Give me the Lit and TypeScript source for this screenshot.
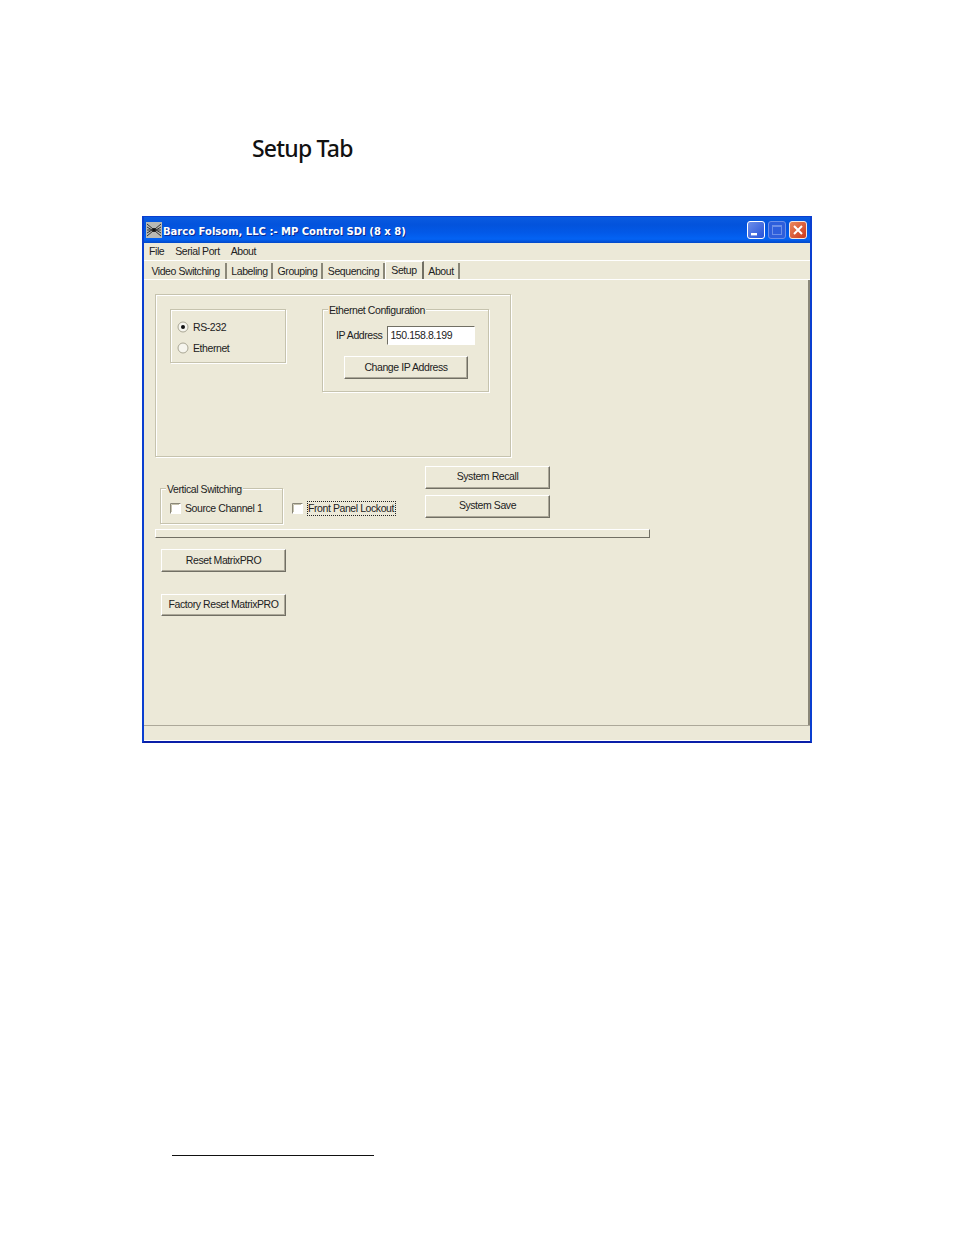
import { LitElement, html, svg, css } from "lit";
import { customElement } from "lit/decorators.js";

@customElement("app-root")
export class AppRoot extends LitElement {
  static styles = css`
    :host { display: block; width: 954px; height: 1235px; background: #fff; overflow: hidden;
      font-family: "Liberation Sans", Arial, sans-serif; font-size: 10.5px; letter-spacing: -0.42px; color: #222; }
    * { box-sizing: border-box; }
    h1 { margin: 0; height: 216px; padding: 132px 0 0 252px; font: 500 23px/32px "Noto Sans", sans-serif; color: #111; letter-spacing: -0.8px; }
    .win { margin-left: 142px; width: 670px; height: 527px; display: flex; flex-direction: column;
      background: #ece9d8; border: solid #0a3fd0; border-width: 1px 2px 2px 2px; border-bottom-color: #0a1fa8; }
    .title { height: 26px; flex: none; display: flex; align-items: center; padding: 0 3px 0 2px;
      background: linear-gradient(#0a5be0 0%, #0353dc 30%, #0259e8 60%, #0363f4 85%, #0248c8 100%); color: #fff;
      font: 700 10px "DejaVu Sans", sans-serif; letter-spacing: 0; text-shadow: 1px 1px 0 #0a2a90; white-space: nowrap; }
    .title span { padding-top: 2px; }
    .title svg.app { margin-right: 1px; flex: none; }
    .ctl { margin-left: auto; display: flex; gap: 3px; }
    .ctl svg { display: block; }
    .menu { height: 18px; flex: none; display: flex; align-items: center; padding: 0 0 1px 5px; border-bottom: 1px solid #fff; }
    .menu span { margin-right: 11px; }
    .tabs { height: 19px; flex: none; display: flex; align-items: flex-end; padding-left: 2px; border-bottom: 1px solid #fff; }
    .tab { height: 16px; display: flex; align-items: center; justify-content: center; border-right: 2px solid #8a8778; background: #ece9d8; margin-right: 1px; }
    .tab.on { height: 18px; margin-right: 0; border-top: 1px solid #fff; border-left: 1px solid #fff; border-right: 2px solid #716f64; padding-bottom: 2px; }
    .body { flex: 1; min-height: 0; padding: 14px 0 0 11px; border-right: 2px solid #8a8778; }
    .group { position: relative; border: 1px solid #c6c3ae; box-shadow: 1px 1px 0 #fff, inset 1px 1px 0 #fff; }
    .legend { position: absolute; top: -6px; left: 5px; background: #ece9d8; padding: 0 1px; line-height: 12px; white-space: nowrap; }
    .outer { width: 356px; height: 163px; display: flex; align-items: flex-start; gap: 36px; padding: 14px 0 0 14px; }
    .rs { width: 116px; height: 54px; padding: 11px 0 0 6px; display: flex; flex-direction: column; gap: 9px; }
    .radio { display: flex; align-items: center; gap: 4px; height: 12px; }
    .radio svg, .check svg { display: block; flex: none; }
    .eth { width: 167px; height: 83px; padding: 16px 0 0 13px; }
    .ip { display: flex; align-items: center; gap: 5px; }
    .ip > span { padding-bottom: 2px; }
    .input { width: 88px; height: 19px; background: #fff; border: 1px solid; border-color: #716f64 #fff #fff #716f64; padding-left: 2px; line-height: 16px; }
    .btn { width: 125px; height: 23px; display: flex; align-items: center; justify-content: center; background: #ece9d8;
      border: 1px solid; border-color: #fff #716f64 #716f64 #fff; box-shadow: inset -1px -1px 0 #aca899; white-space: nowrap; padding-bottom: 3px; }
    .eth .btn { margin: 11px 0 0 8px; width: 124px; padding-bottom: 1px; }
    .row { display: flex; align-items: flex-start; margin-top: 9px; padding-left: 5px; }
    .vs { width: 123px; height: 36px; margin-top: 22px; padding: 14px 0 0 9px; }
    .check { display: flex; align-items: center; gap: 5px; white-space: nowrap; height: 11px; }
    .vs .check { gap: 4px; }
    .vs .check span { padding-bottom: 2px; }
    .fp { margin: 37px 0 0 9px; width: 122px; }
    .fp span { border: 1px dotted #222; line-height: 13px; margin-left: -1px; width: 89px; }
    .stack { display: flex; flex-direction: column; gap: 6px; margin-left: 11px; }
    .bar { width: 495px; height: 9px; margin-top: 5px; border: 1px solid; border-color: #fff #716f64 #716f64 #fff; background: #ece9d8; }
    .resets { padding: 11px 0 0 6px; display: flex; flex-direction: column; gap: 22px; }
    .resets .btn:first-child { padding-bottom: 1px; }
    .resets .btn:last-child { height: 22px; }
    .status { height: 16px; flex: none; border-top: 1px solid #aca899; border-bottom: 1px solid #fff; }
    .note { width: 202px; height: 1px; margin: 412px 0 0 172px; background: #111; }
  `;

  private radio(on: boolean) {
    return html`<svg width="12" height="12" viewBox="0 0 12 12">
      <circle cx="6" cy="6" r="5" fill="#f6f5ee" stroke="#a9a694"/>
      ${on ? svg`<circle cx="6" cy="6" r="2" fill="#111"/>` : ""}
    </svg>`;
  }

  private box() {
    return html`<svg width="11" height="11" viewBox="0 0 11 11">
      <rect x="0" y="0" width="11" height="11" fill="#fff"/>
      <path d="M.5 10.5V.5H10.5" fill="none" stroke="#8a8778"/>
      <path d="M1.5 9V1.5H9" fill="none" stroke="#c6c3ae"/>
    </svg>`;
  }

  render() {
    return html`
      <h1>Setup Tab</h1>
      <div class="win">
        <div class="title">
          <svg class="app" width="16" height="16" viewBox="0 0 16 16">
            <rect width="16" height="16" fill="#b9b9b4"/>
            <path d="M1 2 7 7M1 5 6 8M1 8H6M1 11 6 8M1 14 7 9M15 2 9 7M15 5 10 8M15 8H10M15 11 10 8M15 14 9 9" stroke="#333" fill="none"/>
            <circle cx="8" cy="8" r="2" fill="#111"/>
          </svg>
          <span>Barco Folsom, LLC :- MP Control SDI (8 x 8)</span>
          <div class="ctl">
            <svg width="18" height="18" viewBox="0 0 18 18">
              <defs><linearGradient id="b" x1="0" y1="0" x2="1" y2="1"><stop offset="0" stop-color="#6f90ea"/><stop offset="1" stop-color="#2350d8"/></linearGradient>
              <linearGradient id="r" x1="0" y1="0" x2="1" y2="1"><stop offset="0" stop-color="#ec8a5e"/><stop offset="1" stop-color="#c9361a"/></linearGradient></defs>
              <rect x=".5" y=".5" width="17" height="17" rx="2.5" fill="url(#b)" stroke="#fff"/>
              <rect x="4" y="12" width="6" height="2.4" fill="#fff"/>
            </svg>
            <svg width="18" height="18" viewBox="0 0 18 18">
              <rect x=".5" y=".5" width="17" height="17" rx="2.5" fill="#2e5edc" stroke="#6c8fe8"/>
              <rect x="4.5" y="4.5" width="9" height="9" fill="none" stroke="#6c8fe8"/>
              <rect x="4" y="4" width="10" height="2" fill="#6c8fe8"/>
            </svg>
            <svg width="18" height="18" viewBox="0 0 18 18">
              <rect x=".5" y=".5" width="17" height="17" rx="2.5" fill="url(#r)" stroke="#f4e8e0"/>
              <path d="M5 5 13 13M13 5 5 13" stroke="#fff" stroke-width="2"/>
            </svg>
          </div>
        </div>
        <div class="menu"><span>File</span><span>Serial Port</span><span>About</span></div>
        <div class="tabs">
          <div class="tab" style="width:81px">Video Switching</div>
          <div class="tab" style="width:45px">Labeling</div>
          <div class="tab" style="width:49px">Grouping</div>
          <div class="tab" style="width:61px;margin-right:0">Sequencing</div>
          <div class="tab on" style="width:39px">Setup</div>
          <div class="tab" style="width:36px">About</div>
        </div>
        <div class="body">
          <div class="group outer">
            <div class="group rs">
              <div class="radio">${this.radio(true)}<span>RS-232</span></div>
              <div class="radio">${this.radio(false)}<span>Ethernet</span></div>
            </div>
            <div class="group eth">
              <span class="legend">Ethernet Configuration</span>
              <div class="ip"><span>IP Address</span><div class="input">150.158.8.199</div></div>
              <div class="btn">Change IP Address</div>
            </div>
          </div>
          <div class="row">
            <div class="group vs">
              <span class="legend">Vertical Switching</span>
              <div class="check">${this.box()}<span>Source Channel 1</span></div>
            </div>
            <div class="check fp">${this.box()}<span>Front Panel Lockout</span></div>
            <div class="stack">
              <div class="btn">System Recall</div>
              <div class="btn">System Save</div>
            </div>
          </div>
          <div class="bar"></div>
          <div class="resets">
            <div class="btn">Reset MatrixPRO</div>
            <div class="btn">Factory Reset MatrixPRO</div>
          </div>
        </div>
        <div class="status"></div>
      </div>
      <div class="note"></div>
    `;
  }
}
